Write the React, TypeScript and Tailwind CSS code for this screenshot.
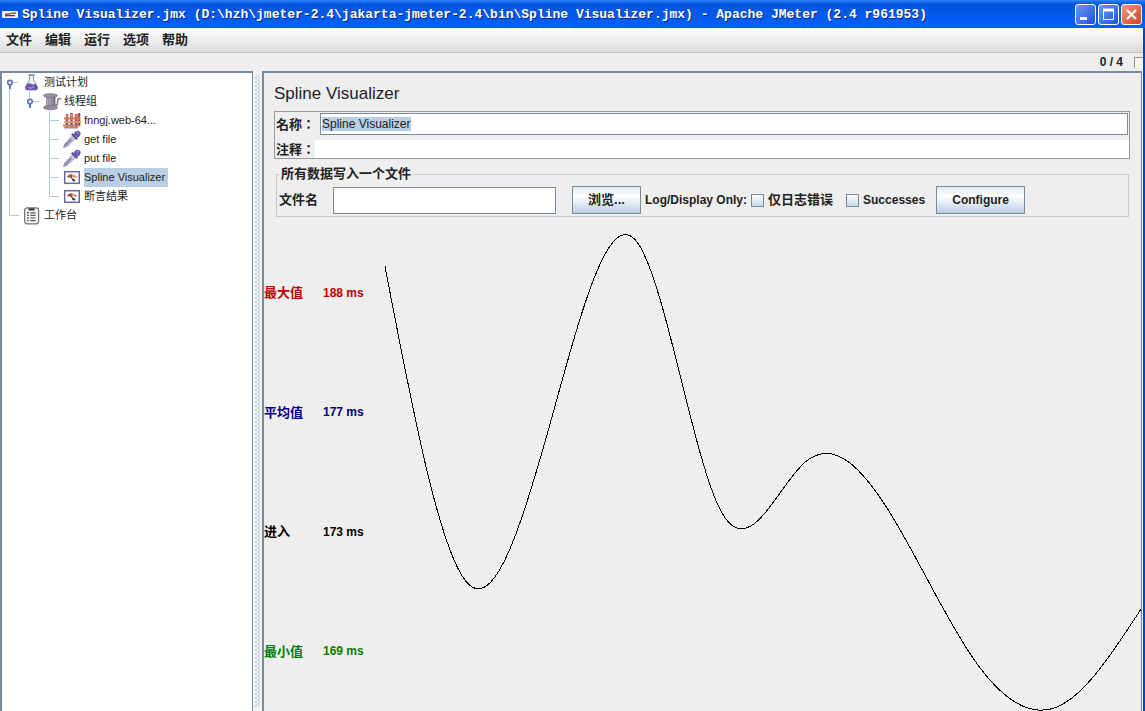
import React, { useEffect, useRef } from 'react';

// =========================
// Data
// =========================
type IconName = 'flask' | 'spool' | 'defaults' | 'dropper' | 'gauge' | 'clipboard';
type Guide = 'handleTop' | 'handleLast' | 'line' | 'blank' | 'tee' | 'end';

const treeRows: { label: string; icon: IconName; guides: Guide[]; selected?: boolean }[] = [
  { label: '测试计划', icon: 'flask', guides: ['handleTop'] },
  { label: '线程组', icon: 'spool', guides: ['line', 'handleLast'] },
  { label: 'fnngj.web-64...', icon: 'defaults', guides: ['line', 'blank', 'tee'] },
  { label: 'get file', icon: 'dropper', guides: ['line', 'blank', 'tee'] },
  { label: 'put file', icon: 'dropper', guides: ['line', 'blank', 'tee'] },
  { label: 'Spline Visualizer', icon: 'gauge', guides: ['line', 'blank', 'tee'], selected: true },
  { label: '断言结果', icon: 'gauge', guides: ['line', 'blank', 'end'] },
  { label: '工作台', icon: 'clipboard', guides: ['end'] },
];

const menus = ['文件', '编辑', '运行', '选项', '帮助'];

const stats = [
  { label: '最大值', value: '188 ms', color: 'text-[#c00000]' },
  { label: '平均值', value: '177 ms', color: 'text-[#000080]' },
  { label: '进入', value: '173 ms', color: 'text-black' },
  { label: '最小值', value: '169 ms', color: 'text-[#008000]' },
];

const samples = [187, 174, 181, 188, 177, 179, 177, 171, 169, 173];

const PLOT_W = 756;
const PLOT_H = 478;
const PLOT_TOP = 9;
const PLOT_BOTTOM = 4;

/**
 * Natural cubic spline through the samples, as an SVG path.
 */
function splinePath(values: number[]) {
  const n = values.length - 1;
  const max = Math.max(...values);
  const min = Math.min(...values);
  const step = (PLOT_H - PLOT_TOP - PLOT_BOTTOM) / (max - min);
  const dx = PLOT_W / n;
  const y = values.map((v) => PLOT_TOP + (max - v) * step);

  // second derivatives (tridiagonal system, zero at both ends)
  const m = new Array(n + 1).fill(0);
  const c = new Array(n + 1).fill(0);
  const d = new Array(n + 1).fill(0);
  for (let i = 1; i < n; i++) {
    const k = 4 - c[i - 1];
    c[i] = 1 / k;
    d[i] = (6 * (y[i - 1] - 2 * y[i] + y[i + 1]) - d[i - 1]) / k;
  }
  for (let i = n - 1; i > 0; i--) m[i] = d[i] - c[i] * m[i + 1];

  let path = `M0 ${y[0].toFixed(2)}`;
  for (let i = 0; i < n; i++) {
    const diff = y[i + 1] - y[i];
    const s0 = diff - (2 * m[i] + m[i + 1]) / 6;
    const s1 = diff + (m[i] + 2 * m[i + 1]) / 6;
    const x = i * dx;
    path += ` C${(x + dx / 3).toFixed(2)} ${(y[i] + s0 / 3).toFixed(2)} ${(x + (2 * dx) / 3).toFixed(2)} ${(y[i + 1] - s1 / 3).toFixed(2)} ${(x + dx).toFixed(2)} ${y[i + 1].toFixed(2)}`;
  }
  return path;
}

// =========================
// Tree parts
// =========================
function TreeGuide({ kind }: { kind: Guide }) {
  return (
    <svg width="20" height="19" viewBox="0 0 20 19" className="shrink-0" fill="none">
      <g stroke="#b4c5d6" strokeWidth="1">
        {kind === 'line' && <path d="M7.5 0V19" />}
        {kind === 'tee' && <path d="M7.5 0V19M8 9.5H17" />}
        {kind === 'end' && <path d="M7.5 0V9.5H17" />}
        {kind === 'handleTop' && <path d="M7.5 12V19M11 9.5H16" />}
        {kind === 'handleLast' && <path d="M7.5 0V6M11 9.5H17" />}
      </g>
      {(kind === 'handleTop' || kind === 'handleLast') && (
        <>
          <path d="M8 12V16" stroke="#6878a8" strokeWidth="2" />
          <circle cx="8" cy="9.5" r="2.3" fill="#dfe8f8" stroke="#6076b4" strokeWidth="1.6" />
        </>
      )}
    </svg>
  );
}

function TreeIcon({ name }: { name: IconName }) {
  return (
    <svg width="20" height="19" viewBox="0 0 20 19" className="shrink-0" fill="none">
      {name === 'flask' && (
        <>
          <path d="M7.5 2.5V7L3.5 13.5Q2.6 17 6 17H13Q16.4 17 15.5 13.5L11.5 7V2.5Z" fill="#eef0f6" stroke="#9a9cab" />
          <path d="M5.6 10.5L3.4 14Q2.6 17 6 17H13Q16.4 17 15.4 14L13.4 10.5Q11 12 9.5 11Q7.5 9.8 5.6 10.5Z" fill="#6a55ab" />
          <path d="M6 14.5Q9 16 12 13.5" stroke="#a79adb" strokeWidth="1.2" />
          <path d="M6.2 2H12.8" stroke="#8d8f9c" strokeWidth="1.6" />
        </>
      )}
      {name === 'spool' && (
        <>
          <path d="M4 4H13.5V15H4Z" fill="#8d8599" />
          <path d="M5.5 5V15M8 5V15" stroke="#b0a8bb" strokeWidth="1.4" />
          <path d="M12.5 5V15" stroke="#6d6578" />
          <ellipse cx="8.5" cy="3.6" rx="7" ry="1.9" fill="#9a92a6" stroke="#777080" strokeWidth=".8" />
          <ellipse cx="8.5" cy="15.6" rx="7" ry="2.1" fill="#938b9f" stroke="#706979" strokeWidth=".8" />
          <path d="M12.5 13Q16 14.5 15.6 9.5Q15.4 5.5 19 7" stroke="#857d92" strokeWidth="1.6" />
        </>
      )}
      {name === 'defaults' && (
        <>
          <path d="M5 3V16M9.5 2V16M14 3V16M17 2V15" stroke="#b04a5e" strokeWidth="2.6" />
          <path d="M5 3.5V6M9.5 3V6M14 3.5V6" stroke="#e58f80" strokeWidth="1.4" />
          <path d="M2 7.5H18M1 14.5H17" stroke="#c8804a" strokeWidth="1.8" />
          <path d="M2 11H19" stroke="#e29b56" strokeWidth="1.8" />
          <path d="M5 12V13.5M9.5 12V13.5M14 12V13.5" stroke="#6c4fa8" strokeWidth="2.4" />
          <path d="M2 16.8H16" stroke="#7c68b5" strokeWidth="1.2" />
        </>
      )}
      {name === 'dropper' && (
        <>
          <path d="M1.6 17.6L3 13.6L11.5 5L14 7.5L5.6 16Z" fill="#c9cbdd" stroke="#8e8da8" strokeWidth="1" />
          <path d="M3 15.8L9.4 9.2" stroke="#8177b4" strokeWidth="1.5" />
          <path d="M9.8 3.8L15.2 9.2" stroke="#5b4a99" strokeWidth="2.2" />
          <path d="M11.6 5.5Q11.8 1 15.6 .8Q18.8 1 18.6 4Q18 7.6 14 7.8Z" fill="#6e5cb2" />
          <path d="M14.6 3L16.4 2.5" stroke="#a99bdc" strokeWidth="1.2" />
        </>
      )}
      {name === 'gauge' && (
        <>
          <rect x="2.7" y="3.7" width="14.6" height="11.6" fill="#fff" stroke="#6f649f" strokeWidth="1.5" />
          <path d="M4.6 8.6Q10 3.8 15.6 8.8L13.6 10.2Q10 7.8 6.6 10Z" fill="#d9a06f" />
          <path d="M4.8 8.4Q7.4 5.9 10.4 6.2L9.4 8.2L6.8 9.2Z" fill="#94594a" />
          <path d="M8.2 8.2L11.8 12.6" stroke="#3e3548" strokeWidth="1.2" />
          <circle cx="11.8" cy="12.2" r="1.3" fill="#3e3548" />
        </>
      )}
      {name === 'clipboard' && (
        <>
          <rect x="2.6" y="1.8" width="14" height="16" rx="2.5" fill="#f4f4f4" stroke="#707070" strokeWidth="1.2" />
          <path d="M6.5 3.4H12.6" stroke="#333" strokeWidth="2.2" />
          <path d="M8.3 6.8H13.5M8.3 9.4H13.5M8.3 12H13.5M8.3 14.6H13.5" stroke="#555" strokeWidth="1.2" />
          <path d="M5.3 6.8H6.8M5.3 9.4H6.8M5.3 12H6.8M5.3 14.6H6.8" stroke="#333" strokeWidth="1.4" />
        </>
      )}
    </svg>
  );
}

// =========================
// Window chrome
// =========================
function TitleBar() {
  return (
    <header className="flex h-7 shrink-0 items-center bg-linear-to-b from-[#2a86f8] from-0% via-[#0453de] via-15% to-[#0062fb] pt-px pr-[3px] pl-[2px]">
      <svg width="16" height="16" viewBox="0 0 16 16" className="shrink-0" fill="none">
        <rect x="0" y="4" width="16" height="7" rx="1" fill="#f7f4fa" />
        <path d="M3 7.5L8 6.6L14 6" stroke="#b03a6a" strokeWidth="1.4" />
        <path d="M3 9L6 8.4L13 8.6" stroke="#4a3a88" strokeWidth="1.4" />
      </svg>
      <h1 className="min-w-0 flex-1 overflow-hidden pt-px pl-1 font-['Liberation_Mono',monospace] text-[13px] leading-5 font-bold whitespace-pre text-white [text-shadow:1px_1px_0_#0a2a80]">
        {'Spline Visualizer.jmx (D:\\hzh\\jmeter-2.4\\jakarta-jmeter-2.4\\bin\\Spline Visualizer.jmx) - Apache JMeter (2.4 r961953)'}
      </h1>
      <div className="flex gap-[2px]">
        <button aria-label="Minimize" className="size-[21px] rounded-[3px] border border-white bg-linear-to-br from-[#6f97f5] to-[#1d4fd8]">
          <svg viewBox="0 0 19 19" fill="none">
            <path d="M4 13.5H11" stroke="#fff" strokeWidth="3" />
          </svg>
        </button>
        <button aria-label="Maximize" className="size-[21px] rounded-[3px] border border-white bg-linear-to-br from-[#6f97f5] to-[#1d4fd8]">
          <svg viewBox="0 0 19 19" fill="none">
            <path d="M4.5 5V14.5H14.5V5" stroke="#fff" />
            <path d="M4 5H15" stroke="#fff" strokeWidth="3" />
          </svg>
        </button>
        <button aria-label="Close" className="size-[21px] rounded-[3px] border border-white bg-linear-to-br from-[#f0957c] to-[#d0401c]">
          <svg viewBox="0 0 19 19" fill="none">
            <path d="M5 5L14 14M14 5L5 14" stroke="#fff" strokeWidth="2.2" />
          </svg>
        </button>
      </div>
    </header>
  );
}

function SwingButton({ children, className }: { children: React.ReactNode; className: string }) {
  return (
    <button
      className={`h-7 shrink-0 border border-[#7a8a99] bg-linear-to-b from-[#dfe9f4] via-white via-35% to-[#b8cfe5] font-bold ${className}`}
    >
      {children}
    </button>
  );
}

function SwingCheck({ id, children, className }: { id: string; children: React.ReactNode; className: string }) {
  return (
    <span className="flex shrink-0 items-center gap-1">
      <input
        id={id}
        type="checkbox"
        className="size-[13px] appearance-none border border-[#7a8a99] bg-linear-to-b from-white to-[#c4d8ea]"
      />
      <label htmlFor={id} className={`whitespace-nowrap ${className}`}>
        {children}
      </label>
    </span>
  );
}

export default function App() {
  const nameRef = useRef<HTMLInputElement>(null);

  // the name is selected when the element is opened
  useEffect(() => {
    nameRef.current?.focus();
    nameRef.current?.select();
  }, []);

  return (
    <div className="flex h-screen flex-col overflow-hidden bg-[#eeeeee] font-['Liberation_Sans','Noto_Sans_CJK_SC',sans-serif] text-[13px] text-[#222222]">
      <TitleBar />

      <div className="flex min-h-0 flex-1 flex-col border-r-2 border-[#0a44c8]">
        {/* Menu */}
        <nav className="flex h-[25px] shrink-0 items-center gap-[13px] border-b border-[#c4c4c4] bg-linear-to-b from-white to-[#dcdcdc] px-[6px]">
          {menus.map((m) => (
            <button key={m} className="leading-5 font-bold">
              {m}
            </button>
          ))}
        </nav>

        {/* Thread counter */}
        <div className="flex h-[18px] shrink-0 items-center justify-end gap-[11px] text-[12px] font-bold">
          <span>0 / 4</span>
          <span className="h-[11px] w-[9px] border-t border-l border-[#8e959c] bg-[#f4f4f4]" />
        </div>

        <main className="flex min-h-0 flex-1 pr-px">
          {/* Test plan tree */}
          <aside className="w-[253px] shrink-0 border-t-2 border-r border-l-2 border-[#7a8a99] bg-white text-[11px]">
            <ul>
              {treeRows.map((row) => (
                <li key={row.label} className="flex h-[19px] items-center">
                  {row.guides.map((g, i) => (
                    <TreeGuide key={i} kind={g} />
                  ))}
                  <TreeIcon name={row.icon} />
                  <span
                    className={
                      row.selected
                        ? 'ml-[2px] bg-[#b8cfe5] pr-[3px] leading-[19px] whitespace-nowrap'
                        : 'ml-[2px] leading-[19px] whitespace-nowrap'
                    }
                  >
                    {row.label}
                  </span>
                </li>
              ))}
            </ul>
          </aside>

          {/* Divider */}
          <div className="w-[9px] shrink-0 bg-[#f1f3f5] px-[2px] py-1">
            <div className="h-full bg-[conic-gradient(#a3adb8_25%,transparent_0_50%,#a3adb8_0_75%,transparent_0)] bg-[size:4px_4px] opacity-50" />
          </div>

          <section className="flex min-w-0 flex-1 flex-col border-t-2 border-r border-l-2 border-[#7a8a99]">
            <div className="shrink-0 pt-[9px] pr-[11px] pl-[10px]">
              <h2 className="text-[17px] leading-6">Spline Visualizer</h2>

              <div className="mt-[5px] border border-[#9a9a9a] p-px pr-0 pb-0">
                <div className="flex items-center pr-px">
                  <label htmlFor="name" className="w-[44px] shrink-0 font-['Noto_Sans_CJK_TC',sans-serif] leading-5 font-bold whitespace-nowrap">
                    名称：
                  </label>
                  <input
                    id="name"
                    ref={nameRef}
                    defaultValue="Spline Visualizer"
                    className="h-[22px] min-w-0 flex-1 border border-[#7a8a99] bg-white px-px text-[12px] leading-5 outline-none selection:bg-[#b8cfe5] selection:text-[#222222]"
                  />
                </div>
                <div className="mt-[5px] flex h-[18px] items-center">
                  <label htmlFor="comment" className="w-[39px] shrink-0 font-['Noto_Sans_CJK_TC',sans-serif] leading-[18px] font-bold whitespace-nowrap">
                    注释：
                  </label>
                  <input id="comment" className="h-[18px] min-w-0 flex-1 bg-white px-px text-[12px] outline-none" />
                </div>
              </div>

              <fieldset className="mt-[7px] mr-px ml-[2px] min-w-0 border border-[#c3c9d0] px-[2px] pt-1 pb-[2px]">
                <legend className="px-[2px] leading-4 font-bold">所有数据写入一个文件</legend>
                <div className="flex items-center text-[12px] font-bold">
                  <label htmlFor="file" className="w-[54px] shrink-0 text-[13px]">
                    文件名
                  </label>
                  <input id="file" className="h-[27px] w-[223px] border border-[#7a8a99] bg-white px-1 font-normal outline-none" />
                  <SwingButton className="ml-4 w-[69px] text-[13px]">浏览...</SwingButton>
                  <span className="mr-1 ml-1 whitespace-nowrap">Log/Display Only:</span>
                  <SwingCheck id="errors" className="text-[13px]">
                    仅日志错误
                  </SwingCheck>
                  <span className="w-[13px] shrink-0" />
                  <SwingCheck id="successes" className="text-[12px]">
                    Successes
                  </SwingCheck>
                  <SwingButton className="ml-[11px] w-[89px] text-[12px]">Configure</SwingButton>
                </div>
              </fieldset>
            </div>

            {/* Graph */}
            <div className="mt-4 flex min-h-0 flex-1">
              <dl className="flex w-[121px] shrink-0 flex-col font-bold">
                {stats.map((s) => (
                  <div key={s.label} className={`flex flex-1 items-center ${s.color}`}>
                    <dt className="w-[59px]">{s.label}</dt>
                    <dd className="text-[12px]">{s.value}</dd>
                  </div>
                ))}
              </dl>
              <svg
                viewBox={`0 0 ${PLOT_W} ${PLOT_H}`}
                preserveAspectRatio="none"
                className="h-full min-w-0 flex-1"
                fill="none"
                shapeRendering="crispEdges"
              >
                <path d={splinePath(samples)} stroke="#000" vectorEffect="non-scaling-stroke" />
              </svg>
            </div>
          </section>
        </main>
      </div>
    </div>
  );
}
